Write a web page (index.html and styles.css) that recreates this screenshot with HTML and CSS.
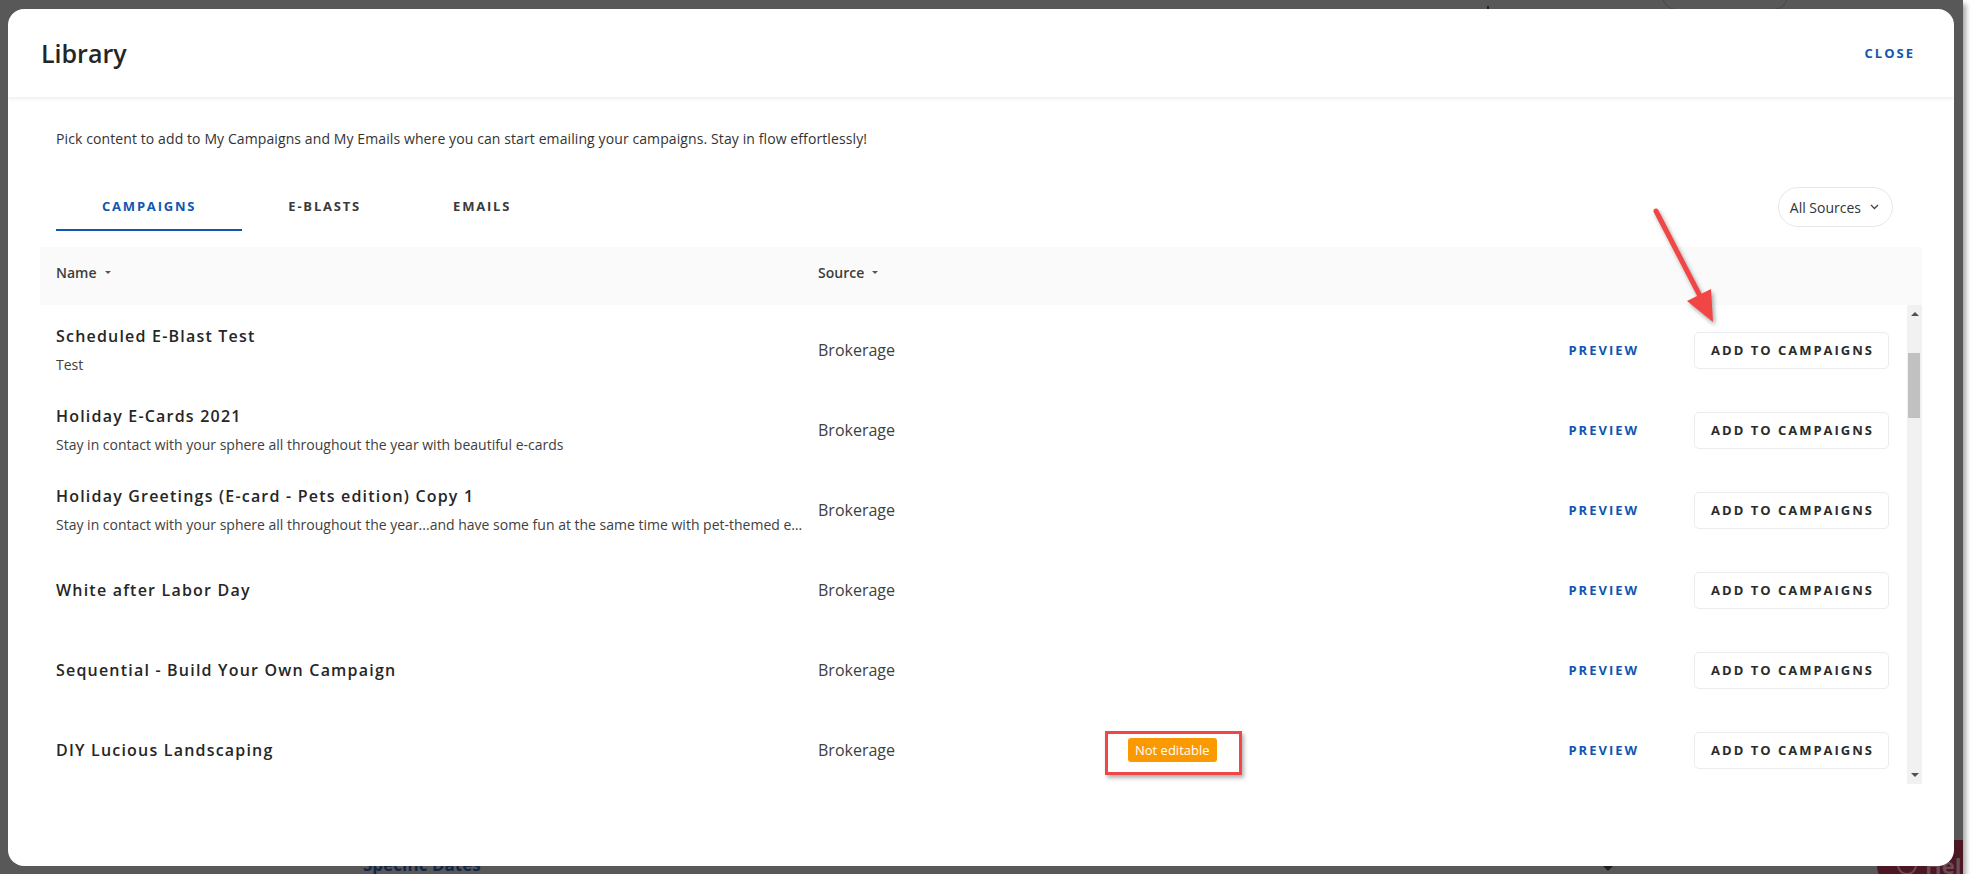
FILE: index.html
```html
<!DOCTYPE html>
<html>
<head>
  <meta charset="utf-8">
  <title>Library</title>
  <link rel="stylesheet" href="styles.css">
</head>
<body>
<div class="screen">
  <!-- bits of the page under the overlay -->
  <div class="under under-pill"></div>
  <div class="under under-tick"></div>
  <div class="under under-dates">Specific Dates</div>
  <div class="under under-caret"></div>
  <div class="under under-help"><span class="help-ring"></span>Help</div>

  <div class="modal">
    <header class="modal-head">
      <h1 class="modal-title">Library</h1>
      <a class="close-link">CLOSE</a>
    </header>

    <div class="modal-body">
      <p class="intro">Pick content to add to My Campaigns and My Emails where you can start emailing your campaigns. Stay in flow effortlessly!</p>

      <div class="tabs-row">
        <nav class="tabs">
          <a class="tab active">CAMPAIGNS</a>
          <a class="tab">E-BLASTS</a>
          <a class="tab">EMAILS</a>
        </nav>
        <button class="source-filter">All Sources
          <svg width="9" height="6" viewBox="0 0 9 6"><path d="M1 1l3.5 3.5L8 1" fill="none" stroke="#444" stroke-width="1.3"/></svg>
        </button>
      </div>

      <div class="library-table">
        <div class="table-head">
          <div class="th th-name">Name <span class="sort-caret"></span></div>
          <div class="th th-source">Source <span class="sort-caret"></span></div>
        </div>

        <div class="table-scroll">
          <div class="rows">
            <div class="row">
              <div class="cell-name">
                <div class="item-title">Scheduled E-Blast Test</div>
                <div class="item-desc">Test</div>
              </div>
              <div class="cell-source">Brokerage</div>
              <div class="cell-badge"></div>
              <a class="preview-link">PREVIEW</a>
              <button class="add-btn">ADD TO CAMPAIGNS</button>
            </div>
            <div class="row">
              <div class="cell-name">
                <div class="item-title">Holiday E-Cards 2021</div>
                <div class="item-desc">Stay in contact with your sphere all throughout the year with beautiful e-cards</div>
              </div>
              <div class="cell-source">Brokerage</div>
              <div class="cell-badge"></div>
              <a class="preview-link">PREVIEW</a>
              <button class="add-btn">ADD TO CAMPAIGNS</button>
            </div>
            <div class="row">
              <div class="cell-name">
                <div class="item-title">Holiday Greetings (E-card - Pets edition) Copy 1</div>
                <div class="item-desc">Stay in contact with your sphere all throughout the year...and have some fun at the same time with pet-themed emails to share with your whole sphere</div>
              </div>
              <div class="cell-source">Brokerage</div>
              <div class="cell-badge"></div>
              <a class="preview-link">PREVIEW</a>
              <button class="add-btn">ADD TO CAMPAIGNS</button>
            </div>
            <div class="row">
              <div class="cell-name">
                <div class="item-title">White after Labor Day</div>
              </div>
              <div class="cell-source">Brokerage</div>
              <div class="cell-badge"></div>
              <a class="preview-link">PREVIEW</a>
              <button class="add-btn">ADD TO CAMPAIGNS</button>
            </div>
            <div class="row">
              <div class="cell-name">
                <div class="item-title">Sequential - Build Your Own Campaign</div>
              </div>
              <div class="cell-source">Brokerage</div>
              <div class="cell-badge"></div>
              <a class="preview-link">PREVIEW</a>
              <button class="add-btn">ADD TO CAMPAIGNS</button>
            </div>
            <div class="row">
              <div class="cell-name">
                <div class="item-title">DIY Lucious Landscaping</div>
              </div>
              <div class="cell-source">Brokerage</div>
              <div class="cell-badge">
                <span class="badge">Not editable<span class="callout-box"></span></span>
              </div>
              <a class="preview-link">PREVIEW</a>
              <button class="add-btn">ADD TO CAMPAIGNS</button>
            </div>
          </div>

          <div class="scrollbar">
            <span class="sb-arrow sb-up"></span>
            <span class="sb-thumb"></span>
            <span class="sb-arrow sb-down"></span>
          </div>
        </div>
      </div>
    </div>
  </div>

  <!-- red annotation arrow -->
  <svg class="callout-arrow" width="1963" height="874" viewBox="0 0 1963 874">
    <line x1="1656" y1="211" x2="1700" y2="296" stroke="#f24646" stroke-width="5" stroke-linecap="round"/>
    <polygon points="1713,322 1687,301 1711,289" fill="#f24646"/>
  </svg>
</div>
</body>
</html>
```

FILE: styles.css
```css
body {
  margin: 0;
  background: #ffffff;
  font-family: 'Open Sans', 'Noto Sans', sans-serif;
  color: #333;
}

.screen {
  position: relative;
  width: 1963px;
  height: 874px;
  padding: 9px 0 0 8px;
  box-sizing: border-box;
  background: #585858;
  box-shadow: 3px 4px 5px rgba(0, 0, 0, 0.35);
  overflow: hidden;
}

/* page underneath the overlay */
.under {
  position: absolute;
}

.under-pill {
  left: 1662px;
  top: -20px;
  width: 124px;
  height: 28px;
  border: 1px solid #474747;
  border-radius: 14px;
}

.under-tick {
  left: 1487px;
  top: 6px;
  width: 2px;
  height: 3px;
  background: #222;
}

.under-dates {
  left: 363px;
  top: 853px;
  font-size: 17px;
  font-weight: 700;
  color: #13264a;
}

.under-caret {
  left: 1603px;
  top: 866px;
  border-left: 5px solid transparent;
  border-right: 5px solid transparent;
  border-top: 5px solid #1e1e1e;
}

.under-help {
  left: 1877px;
  top: 840px;
  width: 120px;
  height: 50px;
  border-radius: 25px;
  background: #4a1722;
  color: #6e4a52;
  font-size: 22px;
  font-weight: 700;
  line-height: 50px;
  padding-left: 20px;
  box-sizing: border-box;
  display: flex;
  align-items: center;
  gap: 8px;
}

.help-ring {
  width: 16px;
  height: 16px;
  border: 2px solid #6e4a52;
  border-radius: 50%;
}

/* modal */
.modal {
  position: relative;
  z-index: 1;
  width: 1946px;
  height: 857px;
  background: #ffffff;
  border-radius: 16px;
  overflow: hidden;
  display: flex;
  flex-direction: column;
}

.modal-head {
  height: 88px;
  flex: none;
  display: flex;
  align-items: center;
  justify-content: space-between;
  padding: 0 39px 0 33px;
  box-shadow: 0 2px 4px rgba(0, 0, 0, 0.07);
  position: relative;
  z-index: 1;
}

.modal-title {
  margin: 0;
  font-size: 25px;
  font-weight: 600;
  color: #252525;
}

.close-link {
  font-size: 13px;
  font-weight: 700;
  letter-spacing: 2px;
  color: #0f56b0;
}

.modal-body {
  padding: 0 32px;
}

.intro {
  margin: 32px 16px 0;
  font-size: 14px;
  letter-spacing: 0.1px;
  line-height: 20px;
  color: #333;
}

.tabs-row {
  margin-top: 34px;
  padding: 0 29px 0 16px;
  display: flex;
  align-items: center;
  justify-content: space-between;
}

.tabs {
  display: flex;
}

.tab {
  height: 46px;
  line-height: 46px;
  padding: 0 46px;
  border-bottom: 2px solid transparent;
  font-size: 13px;
  font-weight: 700;
  letter-spacing: 1.8px;
  color: #3a3a3a;
}

.tab.active {
  color: #0f56b0;
  border-bottom-color: #0f56b0;
}

.source-filter {
  height: 40px;
  padding: 0 13px 0 11px;
  border: 1px solid #e6e6e6;
  border-radius: 20px;
  background: #fff;
  font-family: inherit;
  font-size: 14px;
  color: #333;
  display: flex;
  align-items: center;
  gap: 9px;
}

/* table */
.library-table {
  margin-top: 16px;
}

.table-head {
  height: 58px;
  background: #fafafa;
  display: flex;
  align-items: flex-start;
  box-sizing: border-box;
  padding-top: 16px;
}

.th {
  font-size: 14px;
  font-weight: 600;
  line-height: 20px;
  color: #3d3d3d;
  display: flex;
  align-items: center;
  gap: 8px;
}

.th-name {
  width: 778px;
  padding-left: 16px;
  box-sizing: border-box;
}

.sort-caret {
  border-left: 3px solid transparent;
  border-right: 3px solid transparent;
  border-top: 3px solid #555;
  margin-top: -2px;
}

.table-scroll {
  height: 479px;
  display: flex;
}

.rows {
  flex: 1;
  overflow: hidden;
  padding-top: 5px;
}

.row {
  height: 80px;
  display: grid;
  grid-template-columns: 778px 287px 1fr auto auto;
  align-items: center;
  padding-right: 18px;
}

.cell-name {
  padding: 0 4px 0 16px;
  min-width: 0;
}

.item-title {
  font-size: 16px;
  font-weight: 600;
  letter-spacing: 1.2px;
  line-height: 22px;
  color: #262626;
}

.item-desc {
  margin-top: 8px;
  font-size: 14px;
  line-height: 20px;
  color: #404040;
  white-space: nowrap;
  overflow: hidden;
  text-overflow: ellipsis;
}

.cell-source {
  font-size: 16px;
  color: #404040;
}

.cell-badge {
  padding-left: 23px;
}

.badge {
  position: relative;
  display: inline-block;
  background: #fb9a00;
  color: #fff;
  font-size: 13px;
  line-height: 24px;
  padding: 0 7px;
  border-radius: 3px;
}

/* red annotation round the badge */
.callout-box {
  position: absolute;
  left: -23px;
  top: -7px;
  right: -25px;
  bottom: -13px;
  border: 3px solid #f04646;
  box-shadow: 2px 3px 4px rgba(0, 0, 0, 0.3);
}

.preview-link {
  font-size: 13px;
  font-weight: 700;
  letter-spacing: 2px;
  color: #0f56b0;
  margin-right: 55px;
}

.add-btn {
  height: 37px;
  padding: 0 14px 0 16px;
  border: 1px solid #ececec;
  border-radius: 5px;
  background: #fff;
  font-family: inherit;
  font-size: 13px;
  font-weight: 700;
  letter-spacing: 2px;
  color: #2b2b2b;
}

.scrollbar {
  width: 15px;
  background: #f1f1f1;
  position: relative;
}

.sb-arrow {
  position: absolute;
  left: 4px;
  border-left: 4px solid transparent;
  border-right: 4px solid transparent;
}

.sb-up {
  top: 7px;
  border-bottom: 4px solid #505050;
}

.sb-down {
  bottom: 7px;
  border-top: 4px solid #505050;
}

.sb-thumb {
  position: absolute;
  left: 1px;
  right: 2px;
  top: 48px;
  height: 65px;
  background: #c1c1c1;
}

.callout-arrow {
  position: absolute;
  left: 0;
  top: 0;
  z-index: 2;
  pointer-events: none;
  filter: drop-shadow(2px 3px 2px rgba(0, 0, 0, 0.35));
}
```
